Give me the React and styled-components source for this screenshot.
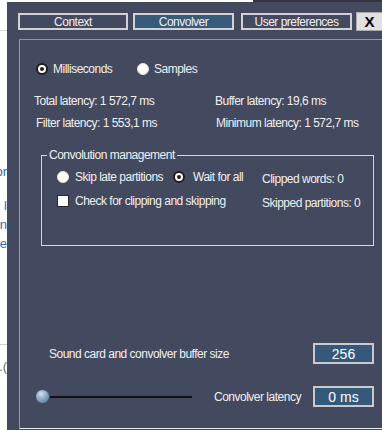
import React from 'react'
import styled, { createGlobalStyle } from 'styled-components'

const GlobalStyle = createGlobalStyle`
html, body {
  margin: 0;
  padding: 0;
  background: #fff;
}
body {
  font-family: "Liberation Sans", Arial, sans-serif;
}
`

const Page = styled.div`
display: flex;
width: 382px;
height: 430px;
overflow: hidden;
`
const LeftStrip = styled.div`
width: 7px;
flex-shrink: 0;
background: #fff;
display: flex;
flex-direction: column;
overflow: hidden;
font-size: 13px;
color: #2c6cb4;
`
const StripRule = styled.div`
height: 1px;
background: ${(p) => p.$color || '#d9d9d9'};
margin-top: ${(p) => p.$top}px;
`
const Frag = styled.div`
display: flex;
justify-content: flex-end;
white-space: nowrap;
line-height: 15px;
margin-top: ${(p) => p.$top}px;
color: ${(p) => p.$color || 'inherit'};
`
const Main = styled.div`
flex: 1;
min-width: 0;
display: flex;
flex-direction: column;
`
const TopEdge = styled.div`
height: 2px;
display: flex;
`
const TopWhite = styled.div`
width: 246px;
background: #fff;
`
const TopDark = styled.div`
flex: 1;
background: #34343e;
`
const Dialog = styled.div`
flex: 1;
background: #434a5f;
padding: 11px 0 1px 11px;
display: flex;
flex-direction: column;
overflow: hidden;
color: #f0f0f0;
font-size: 12px;
letter-spacing: -0.5px;
`
const TabRow = styled.div`
display: flex;
align-items: flex-start;
height: 17px;
`
const Tab = styled.div`
width: ${(p) => p.$w}px;
margin-right: ${(p) => p.$gap || 0}px;
height: 17px;
box-sizing: border-box;
border: 2px solid #d2d2d2;
background: ${(p) => (p.$active ? '#385a7b' : '#434a5f')};
display: flex;
align-items: center;
justify-content: center;
flex-shrink: 0;
`
const CloseButton = styled.div`
width: 27px;
height: 19px;
margin-top: -1px;
box-sizing: border-box;
border: 1px solid #a9a9a9;
background: #e1e1e1;
color: #000;
font-weight: bold;
font-size: 15px;
letter-spacing: 0;
display: flex;
align-items: center;
justify-content: center;
flex-shrink: 0;
`
const Panel = styled.div`
flex: 1;
margin: 9px 0 0 1px;
border-top: 1px solid #9598a3;
border-left: 1px solid #9598a3;
border-bottom: 1px solid #ececec;
display: flex;
flex-direction: column;
`
const RadioRow = styled.div`
margin-top: 22px;
padding-left: 16px;
display: grid;
grid-template-columns: 101px auto;
align-items: center;
height: 12px;
`
const Option = styled.label`
display: flex;
align-items: center;
gap: ${(p) => p.$gap || 5}px;
white-space: nowrap;
line-height: 14px;
`
const Radio = styled.span`
width: 12px;
height: 12px;
box-sizing: border-box;
border-radius: 50%;
background: #fff;
border: ${(p) => (p.$checked ? '2px solid #1e1e1e' : '1px solid #e6e6e6')};
display: flex;
align-items: center;
justify-content: center;
flex-shrink: 0;
&::after {
  content: '';
  width: 4px;
  height: 4px;
  border-radius: 50%;
  background: ${(p) => (p.$checked ? '#1e1e1e' : 'transparent')};
}
`
const Checkbox = styled.span`
width: 12px;
height: 12px;
box-sizing: border-box;
background: #fff;
border: 1px solid #2a2a2a;
flex-shrink: 0;
`
const Stats = styled.div`
margin-top: 20px;
padding-left: 14px;
display: grid;
grid-template-columns: 181px auto;
row-gap: 8px;
line-height: 14px;
`
const Stat = styled.div`
padding-left: ${(p) => p.$indent || 0}px;
white-space: nowrap;
`
const Group = styled.fieldset`
margin: 18px 0 0 21px;
width: 333px;
box-sizing: border-box;
border: 1px solid #d6d6d6;
padding: 9px 0 38px 0;
min-width: 0;
`
const Legend = styled.legend`
margin-left: 5px;
padding: 0 2px;
line-height: 14px;
`
const GroupGrid = styled.div`
padding-left: 15px;
display: grid;
grid-template-columns: 116px 89px auto;
grid-template-rows: 12px 12px;
row-gap: 12px;
align-items: center;
`
const Wide = styled.div`
grid-column: span 2;
`
const Counter = styled.div`
padding-top: 4px;
white-space: nowrap;
line-height: 14px;
`
const Spacer = styled.div`
flex: 1;
`
const SettingRow = styled.div`
display: flex;
align-items: center;
height: 21px;
margin-top: ${(p) => p.$top || 0}px;
margin-bottom: ${(p) => p.$bottom || 0}px;
padding: 0 8px 0 ${(p) => p.$left}px;
`
const SettingLabel = styled.div`
white-space: nowrap;
margin-left: ${(p) => p.$left || 0}px;
`
const ValueBox = styled.div`
margin-left: auto;
width: 61px;
height: 21px;
box-sizing: border-box;
border: 2px solid #cacaca;
background: #35597b;
color: #fff;
font-size: 14px;
letter-spacing: 0;
display: flex;
align-items: center;
justify-content: center;
`
const Slider = styled.div`
display: flex;
align-items: center;
`
const Thumb = styled.div`
width: 15px;
height: 15px;
border-radius: 50%;
box-sizing: border-box;
border: 1px solid #3d4f63;
background: radial-gradient(circle at 40% 30%, #d3e0ec 0%, #8ea9c3 45%, #4c6b8a 100%);
flex-shrink: 0;
`
const Track = styled.div`
width: 142px;
height: 2px;
background: #121212;
`

const App = () => {
  return (
    <Page>
      <GlobalStyle />
      <LeftStrip>
        <StripRule $top={30} />
        <Frag $top={133}>for</Frag>
        <Frag $top={19}>ate: l</Frag>
        <Frag $top={4}>in</Frag>
        <Frag $top={4}>ne</Frag>
        <StripRule $top={93} $color="#c5d3e2" />
        <Frag $top={14} $color="#666">1.(</Frag>
      </LeftStrip>
      <Main>
        <TopEdge>
          <TopWhite />
          <TopDark />
        </TopEdge>
        <Dialog>
          <TabRow>
            <Tab $w={110} $gap={5}>Context</Tab>
            <Tab $w={101} $gap={7} $active>Convolver</Tab>
            <Tab $w={111} $gap={4}>User preferences</Tab>
            <CloseButton>X</CloseButton>
          </TabRow>
          <Panel>
            <RadioRow>
              <Option><Radio $checked />Milliseconds</Option>
              <Option><Radio />Samples</Option>
            </RadioRow>
            <Stats>
              <Stat>Total latency: 1 572,7 ms</Stat>
              <Stat>Buffer latency: 19,6 ms</Stat>
              <Stat $indent={2}>Filter latency: 1 553,1 ms</Stat>
              <Stat $indent={1}>Minimum latency: 1 572,7 ms</Stat>
            </Stats>
            <Group>
              <Legend>Convolution management</Legend>
              <GroupGrid>
                <Option $gap={6}><Radio />Skip late partitions</Option>
                <Option $gap={8}><Radio $checked />Wait for all</Option>
                <Counter>Clipped words: 0</Counter>
                <Wide>
                  <Option $gap={6}><Checkbox />Check for clipping and skipping</Option>
                </Wide>
                <Counter>Skipped partitions: 0</Counter>
              </GroupGrid>
            </Group>
            <Spacer />
            <SettingRow $left={29}>
              <SettingLabel>Sound card and convolver buffer size</SettingLabel>
              <ValueBox>256</ValueBox>
            </SettingRow>
            <SettingRow $left={15} $top={22} $bottom={21}>
              <Slider>
                <Thumb />
                <Track />
              </Slider>
              <SettingLabel $left={22}>Convolver latency</SettingLabel>
              <ValueBox>0 ms</ValueBox>
            </SettingRow>
          </Panel>
        </Dialog>
      </Main>
    </Page>
  )
}

export default App
